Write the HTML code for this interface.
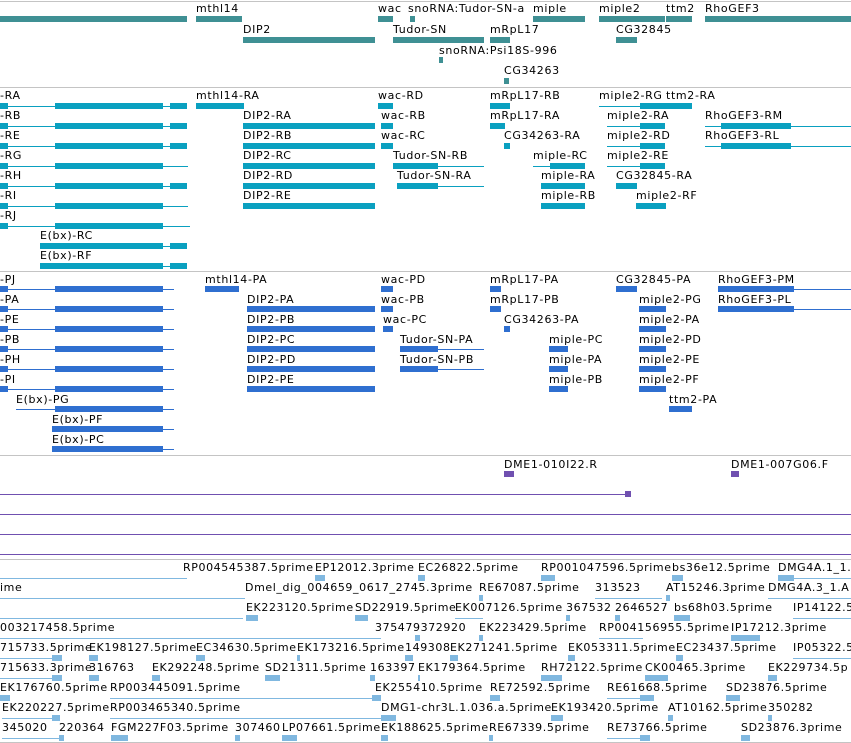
<!DOCTYPE html>
<html><head><meta charset="utf-8"><style>
body{margin:0;width:851px;height:743px;overflow:hidden;background:#fff;position:relative;font-family:"DejaVu Sans","Liberation Sans",sans-serif}
.t{position:absolute;font-size:11px;line-height:13px;white-space:nowrap;color:#000;letter-spacing:.65px}
.s{position:absolute;height:1px;background:#c4c4c4;left:0;width:851px}
.b{position:absolute;height:6px}
.l{position:absolute;height:1px}
.a{background:#3f9094}.c{background:#0aa0c0}.d{background:#2f6fd0}.p{background:#7050b0}.e{background:#80b8e0}
.f{letter-spacing:.6px}
</style></head><body>
<div class="s" style="top:1px"></div>
<div class="s" style="top:87px"></div>
<div class="s" style="top:271px"></div>
<div class="s" style="top:455px"></div>
<div class="s" style="top:559px"></div>
<div class="s" style="top:742px"></div>

<!-- track 1 -->
<div class="t" style="left:196px;top:2px">mthl14</div>
<div class="t" style="left:378px;top:2px">wac</div>
<div class="t" style="left:408px;top:2px">snoRNA:Tudor-SN-a</div>
<div class="t" style="left:533px;top:2px">miple</div>
<div class="t" style="left:599px;top:2px">miple2</div>
<div class="t" style="left:666px;top:2px">ttm2</div>
<div class="t" style="left:705px;top:2px">RhoGEF3</div>
<div class="b a" style="left:0;width:187px;top:16px"></div>
<div class="b a" style="left:196px;width:46px;top:16px"></div>
<div class="b a" style="left:378px;width:15px;top:16px"></div>
<div class="b a" style="left:410px;width:5px;top:16px"></div>
<div class="b a" style="left:533px;width:52px;top:16px"></div>
<div class="b a" style="left:599px;width:66px;top:16px"></div>
<div class="b a" style="left:666px;width:26px;top:16px"></div>
<div class="b a" style="left:705px;width:146px;top:16px"></div>
<div class="t" style="left:243px;top:23px">DIP2</div>
<div class="t" style="left:393px;top:23px">Tudor-SN</div>
<div class="t" style="left:490px;top:23px">mRpL17</div>
<div class="t" style="left:616px;top:23px">CG32845</div>
<div class="b a" style="left:243px;width:132px;top:37px"></div>
<div class="b a" style="left:393px;width:91px;top:37px"></div>
<div class="b a" style="left:490px;width:20px;top:37px"></div>
<div class="b a" style="left:616px;width:21px;top:37px"></div>
<div class="t" style="left:439px;top:44px">snoRNA:Psi18S-996</div>
<div class="b a" style="left:439px;width:4px;top:57px"></div>
<div class="t" style="left:504px;top:64px">CG34263</div>
<div class="b a" style="left:504px;width:5px;top:78px"></div>

<!-- track 2 -->
<div class="t" style="left:0;top:89px">-RA</div>
<div class="t" style="left:0;top:109px">-RB</div>
<div class="t" style="left:0;top:129px">-RE</div>
<div class="t" style="left:0;top:149px">-RG</div>
<div class="t" style="left:0;top:169px">-RH</div>
<div class="t" style="left:0;top:189px">-RI</div>
<div class="t" style="left:0;top:209px">-RJ</div>
<div class="t" style="left:40px;top:229px">E(bx)-RC</div>
<div class="t" style="left:40px;top:249px">E(bx)-RF</div>
<div class="l c" style="left:0;width:187px;top:106px"></div><div class="b c" style="left:55px;width:108px;top:103px"></div><div class="b c" style="left:0;width:8px;top:103px"></div><div class="b c" style="left:170px;width:17px;top:103px"></div>
<div class="l c" style="left:0;width:187px;top:126px"></div><div class="b c" style="left:55px;width:108px;top:123px"></div><div class="b c" style="left:0;width:8px;top:123px"></div><div class="b c" style="left:170px;width:17px;top:123px"></div>
<div class="l c" style="left:0;width:187px;top:146px"></div><div class="b c" style="left:55px;width:108px;top:143px"></div><div class="b c" style="left:0;width:8px;top:143px"></div><div class="b c" style="left:170px;width:17px;top:143px"></div>
<div class="l c" style="left:0;width:188px;top:166px"></div><div class="b c" style="left:55px;width:108px;top:163px"></div><div class="b c" style="left:0;width:8px;top:163px"></div>
<div class="l c" style="left:0;width:187px;top:186px"></div><div class="b c" style="left:55px;width:108px;top:183px"></div><div class="b c" style="left:0;width:8px;top:183px"></div><div class="b c" style="left:170px;width:17px;top:183px"></div>
<div class="l c" style="left:0;width:188px;top:206px"></div><div class="b c" style="left:55px;width:108px;top:203px"></div><div class="b c" style="left:0;width:8px;top:203px"></div>
<div class="l c" style="left:0;width:190px;top:226px"></div><div class="b c" style="left:55px;width:108px;top:223px"></div><div class="b c" style="left:0;width:8px;top:223px"></div>
<div class="l c" style="left:40px;width:147px;top:246px"></div><div class="b c" style="left:40px;width:123px;top:243px"></div><div class="b c" style="left:170px;width:17px;top:243px"></div>
<div class="l c" style="left:40px;width:147px;top:266px"></div><div class="b c" style="left:40px;width:123px;top:263px"></div><div class="b c" style="left:170px;width:17px;top:263px"></div>

<div class="t" style="left:196px;top:89px">mthl14-RA</div><div class="b c" style="left:196px;width:48px;top:103px"></div>
<div class="t" style="left:243px;top:109px">DIP2-RA</div><div class="b c" style="left:243px;width:132px;top:123px"></div>
<div class="t" style="left:243px;top:129px">DIP2-RB</div><div class="b c" style="left:243px;width:132px;top:143px"></div>
<div class="t" style="left:243px;top:149px">DIP2-RC</div><div class="b c" style="left:243px;width:132px;top:163px"></div>
<div class="t" style="left:243px;top:169px">DIP2-RD</div><div class="b c" style="left:243px;width:132px;top:183px"></div>
<div class="t" style="left:243px;top:189px">DIP2-RE</div><div class="b c" style="left:243px;width:132px;top:203px"></div>
<div class="t" style="left:378px;top:89px">wac-RD</div><div class="b c" style="left:378px;width:15px;top:103px"></div>
<div class="t" style="left:381px;top:109px">wac-RB</div><div class="b c" style="left:381px;width:12px;top:123px"></div>
<div class="t" style="left:381px;top:129px">wac-RC</div><div class="b c" style="left:381px;width:12px;top:143px"></div>
<div class="t" style="left:393px;top:149px">Tudor-SN-RB</div><div class="l c" style="left:393px;width:91px;top:166px"></div><div class="b c" style="left:393px;width:45px;top:163px"></div>
<div class="t" style="left:397px;top:169px">Tudor-SN-RA</div><div class="l c" style="left:397px;width:87px;top:186px"></div><div class="b c" style="left:397px;width:41px;top:183px"></div>
<div class="t" style="left:490px;top:89px">mRpL17-RB</div><div class="b c" style="left:490px;width:20px;top:103px"></div>
<div class="t" style="left:490px;top:109px">mRpL17-RA</div><div class="b c" style="left:490px;width:15px;top:123px"></div>
<div class="t" style="left:504px;top:129px">CG34263-RA</div><div class="b c" style="left:504px;width:6px;top:143px"></div>
<div class="t" style="left:533px;top:149px">miple-RC</div><div class="l c" style="left:533px;width:52px;top:166px"></div><div class="b c" style="left:550px;width:35px;top:163px"></div>
<div class="t" style="left:541px;top:169px">miple-RA</div><div class="b c" style="left:541px;width:44px;top:183px"></div>
<div class="t" style="left:541px;top:189px">miple-RB</div><div class="b c" style="left:541px;width:44px;top:203px"></div>
<div class="t" style="left:599px;top:89px">miple2-RG</div><div class="l c" style="left:599px;width:93px;top:106px"></div><div class="b c" style="left:640px;width:52px;top:103px"></div>
<div class="t" style="left:666px;top:89px">ttm2-RA</div>
<div class="t" style="left:607px;top:109px">miple2-RA</div><div class="l c" style="left:607px;width:58px;top:126px"></div><div class="b c" style="left:640px;width:25px;top:123px"></div>
<div class="t" style="left:607px;top:129px">miple2-RD</div><div class="l c" style="left:607px;width:58px;top:146px"></div><div class="b c" style="left:640px;width:25px;top:143px"></div>
<div class="t" style="left:607px;top:149px">miple2-RE</div><div class="l c" style="left:607px;width:58px;top:166px"></div><div class="b c" style="left:640px;width:25px;top:163px"></div>
<div class="t" style="left:616px;top:169px">CG32845-RA</div><div class="b c" style="left:616px;width:21px;top:183px"></div>
<div class="t" style="left:636px;top:189px">miple2-RF</div><div class="b c" style="left:636px;width:30px;top:203px"></div>
<div class="t" style="left:705px;top:109px">RhoGEF3-RM</div><div class="l c" style="left:705px;width:146px;top:126px"></div><div class="b c" style="left:721px;width:70px;top:123px"></div>
<div class="t" style="left:705px;top:129px">RhoGEF3-RL</div><div class="l c" style="left:705px;width:146px;top:146px"></div><div class="b c" style="left:721px;width:70px;top:143px"></div>

<!-- track 3 -->
<div class="t" style="left:0;top:273px">-PJ</div>
<div class="t" style="left:0;top:293px">-PA</div>
<div class="t" style="left:0;top:313px">-PE</div>
<div class="t" style="left:0;top:333px">-PB</div>
<div class="t" style="left:0;top:353px">-PH</div>
<div class="t" style="left:0;top:373px">-PI</div>
<div class="t" style="left:16px;top:393px">E(bx)-PG</div>
<div class="t" style="left:52px;top:413px">E(bx)-PF</div>
<div class="t" style="left:52px;top:433px">E(bx)-PC</div>
<div class="l d" style="left:0;width:174px;top:289px"></div><div class="b d" style="left:55px;width:108px;top:286px"></div><div class="b d" style="left:0;width:8px;top:286px"></div>
<div class="l d" style="left:0;width:174px;top:309px"></div><div class="b d" style="left:55px;width:108px;top:306px"></div><div class="b d" style="left:0;width:8px;top:306px"></div>
<div class="l d" style="left:0;width:174px;top:329px"></div><div class="b d" style="left:55px;width:108px;top:326px"></div><div class="b d" style="left:0;width:8px;top:326px"></div>
<div class="l d" style="left:0;width:174px;top:349px"></div><div class="b d" style="left:55px;width:108px;top:346px"></div><div class="b d" style="left:0;width:8px;top:346px"></div>
<div class="l d" style="left:0;width:174px;top:369px"></div><div class="b d" style="left:55px;width:108px;top:366px"></div><div class="b d" style="left:0;width:8px;top:366px"></div>
<div class="l d" style="left:0;width:174px;top:389px"></div><div class="b d" style="left:55px;width:108px;top:386px"></div><div class="b d" style="left:0;width:8px;top:386px"></div>
<div class="l d" style="left:16px;width:158px;top:409px"></div><div class="b d" style="left:55px;width:108px;top:406px"></div>
<div class="l d" style="left:52px;width:122px;top:429px"></div><div class="b d" style="left:52px;width:111px;top:426px"></div>
<div class="l d" style="left:52px;width:122px;top:449px"></div><div class="b d" style="left:52px;width:111px;top:446px"></div>

<div class="t" style="left:205px;top:273px">mthl14-PA</div><div class="b d" style="left:205px;width:34px;top:286px"></div>
<div class="t" style="left:247px;top:293px">DIP2-PA</div><div class="b d" style="left:247px;width:128px;top:306px"></div>
<div class="t" style="left:247px;top:313px">DIP2-PB</div><div class="b d" style="left:247px;width:128px;top:326px"></div>
<div class="t" style="left:247px;top:333px">DIP2-PC</div><div class="b d" style="left:247px;width:128px;top:346px"></div>
<div class="t" style="left:247px;top:353px">DIP2-PD</div><div class="b d" style="left:247px;width:128px;top:366px"></div>
<div class="t" style="left:247px;top:373px">DIP2-PE</div><div class="b d" style="left:247px;width:128px;top:386px"></div>
<div class="t" style="left:381px;top:273px">wac-PD</div><div class="b d" style="left:381px;width:12px;top:286px"></div>
<div class="t" style="left:381px;top:293px">wac-PB</div><div class="b d" style="left:381px;width:12px;top:306px"></div>
<div class="t" style="left:383px;top:313px">wac-PC</div><div class="b d" style="left:383px;width:10px;top:326px"></div>
<div class="t" style="left:400px;top:333px">Tudor-SN-PA</div><div class="l d" style="left:400px;width:84px;top:349px"></div><div class="b d" style="left:400px;width:38px;top:346px"></div>
<div class="t" style="left:400px;top:353px">Tudor-SN-PB</div><div class="l d" style="left:400px;width:84px;top:369px"></div><div class="b d" style="left:400px;width:38px;top:366px"></div>
<div class="t" style="left:490px;top:273px">mRpL17-PA</div><div class="b d" style="left:490px;width:11px;top:286px"></div>
<div class="t" style="left:490px;top:293px">mRpL17-PB</div><div class="b d" style="left:490px;width:11px;top:306px"></div>
<div class="t" style="left:504px;top:313px">CG34263-PA</div><div class="b d" style="left:504px;width:6px;top:326px"></div>
<div class="t" style="left:549px;top:333px">miple-PC</div><div class="b d" style="left:549px;width:19px;top:346px"></div>
<div class="t" style="left:549px;top:353px">miple-PA</div><div class="b d" style="left:549px;width:19px;top:366px"></div>
<div class="t" style="left:549px;top:373px">miple-PB</div><div class="b d" style="left:549px;width:19px;top:386px"></div>
<div class="t" style="left:616px;top:273px">CG32845-PA</div><div class="b d" style="left:616px;width:21px;top:286px"></div>
<div class="t" style="left:639px;top:293px">miple2-PG</div><div class="b d" style="left:639px;width:27px;top:306px"></div>
<div class="t" style="left:639px;top:313px">miple2-PA</div><div class="b d" style="left:639px;width:27px;top:326px"></div>
<div class="t" style="left:639px;top:333px">miple2-PD</div><div class="b d" style="left:639px;width:27px;top:346px"></div>
<div class="t" style="left:639px;top:353px">miple2-PE</div><div class="b d" style="left:639px;width:27px;top:366px"></div>
<div class="t" style="left:639px;top:373px">miple2-PF</div><div class="b d" style="left:639px;width:27px;top:386px"></div>
<div class="t" style="left:669px;top:393px">ttm2-PA</div><div class="b d" style="left:669px;width:23px;top:406px"></div>
<div class="t" style="left:718px;top:273px">RhoGEF3-PM</div><div class="l d" style="left:718px;width:133px;top:289px"></div><div class="b d" style="left:718px;width:76px;top:286px"></div>
<div class="t" style="left:718px;top:293px">RhoGEF3-PL</div><div class="l d" style="left:718px;width:133px;top:309px"></div><div class="b d" style="left:718px;width:76px;top:306px"></div>

<!-- track 4 -->
<div class="t" style="left:504px;top:458px">DME1-010I22.R</div><div class="b p" style="left:504px;width:10px;top:471px"></div>
<div class="t" style="left:731px;top:458px">DME1-007G06.F</div><div class="b p" style="left:731px;width:8px;top:471px"></div>
<div class="l p" style="left:0;width:630px;top:494px"></div><div class="b p" style="left:625px;width:6px;top:491px"></div>
<div class="l p" style="left:0;width:851px;top:514px"></div>
<div class="l p" style="left:0;width:851px;top:534px"></div>
<div class="l p" style="left:0;width:851px;top:554px"></div>

<!-- track 5 -->
<div class="t f" style="left:183px;top:561px">RP004545387.5prime</div>
<div class="t f" style="left:315px;top:561px">EP12012.3prime</div>
<div class="t f" style="left:418px;top:561px">EC26822.5prime</div>
<div class="t f" style="left:541px;top:561px">RP001047596.5prime</div>
<div class="t f" style="left:672px;top:561px">bs36e12.5prime</div>
<div class="t f" style="left:778px;top:561px">DMG4A.1_1.A</div>
<div class="t f" style="left:0;top:581px">ime</div>
<div class="t f" style="left:245px;top:581px">Dmel_dig_004659_0617_2745.3prime</div>
<div class="t f" style="left:479px;top:581px">RE67087.5prime</div>
<div class="t f" style="left:595px;top:581px">313523</div>
<div class="t f" style="left:666px;top:581px">AT15246.3prime</div>
<div class="t f" style="left:768px;top:581px">DMG4A.3_1.A</div>
<div class="t f" style="left:246px;top:601px">EK223120.5prime</div>
<div class="t f" style="left:355px;top:601px">SD22919.5prime</div>
<div class="t f" style="left:455px;top:601px">EK007126.5prime</div>
<div class="t f" style="left:566px;top:601px">367532</div>
<div class="t f" style="left:615px;top:601px">2646527</div>
<div class="t f" style="left:674px;top:601px">bs68h03.5prime</div>
<div class="t f" style="left:793px;top:601px">IP14122.5</div>
<div class="t f" style="left:0;top:621px">003217458.5prime</div>
<div class="t f" style="left:375px;top:621px">375479372920</div>
<div class="t f" style="left:479px;top:621px">EK223429.5prime</div>
<div class="t f" style="left:599px;top:621px">RP004156955.5prime</div>
<div class="t f" style="left:731px;top:621px">IP17212.3prime</div>
<div class="t f" style="left:0;top:641px">715733.5prime</div>
<div class="t f" style="left:89px;top:641px">EK198127.5prime</div>
<div class="t f" style="left:196px;top:641px">EC34630.5prime</div>
<div class="t f" style="left:297px;top:641px">EK173216.5prime</div>
<div class="t f" style="left:405px;top:641px">149308</div>
<div class="t f" style="left:450px;top:641px">EK271241.5prime</div>
<div class="t f" style="left:568px;top:641px">EK053311.5prime</div>
<div class="t f" style="left:676px;top:641px">EC23437.5prime</div>
<div class="t f" style="left:793px;top:641px">IP05322.5</div>
<div class="t f" style="left:0;top:661px">715633.3prime</div>
<div class="t f" style="left:89px;top:661px">316763</div>
<div class="t f" style="left:152px;top:661px">EK292248.5prime</div>
<div class="t f" style="left:265px;top:661px">SD21311.5prime</div>
<div class="t f" style="left:370px;top:661px">163397</div>
<div class="t f" style="left:418px;top:661px">EK179364.5prime</div>
<div class="t f" style="left:541px;top:661px">RH72122.5prime</div>
<div class="t f" style="left:645px;top:661px">CK00465.3prime</div>
<div class="t f" style="left:768px;top:661px">EK229734.5p</div>
<div class="t f" style="left:0;top:681px">EK176760.5prime</div>
<div class="t f" style="left:110px;top:681px">RP003445091.5prime</div>
<div class="t f" style="left:375px;top:681px">EK255410.5prime</div>
<div class="t f" style="left:490px;top:681px">RE72592.5prime</div>
<div class="t f" style="left:607px;top:681px">RE61668.5prime</div>
<div class="t f" style="left:726px;top:681px">SD23876.5prime</div>
<div class="t f" style="left:2px;top:701px">EK220227.5prime</div>
<div class="t f" style="left:110px;top:701px">RP003465340.5prime</div>
<div class="t f" style="left:381px;top:701px">DMG1-chr3L.1.036.a.5prime</div>
<div class="t f" style="left:551px;top:701px">EK193420.5prime</div>
<div class="t f" style="left:668px;top:701px">AT10162.5prime</div>
<div class="t f" style="left:768px;top:701px">350282</div>
<div class="t f" style="left:2px;top:721px">345020</div>
<div class="t f" style="left:59px;top:721px">220364</div>
<div class="t f" style="left:111px;top:721px">FGM227F03.5prime</div>
<div class="t f" style="left:235px;top:721px">307460</div>
<div class="t f" style="left:282px;top:721px">LP07661.5prime</div>
<div class="t f" style="left:381px;top:721px">EK188625.5prime</div>
<div class="t f" style="left:489px;top:721px">RE67339.5prime</div>
<div class="t f" style="left:607px;top:721px">RE73766.5prime</div>
<div class="t f" style="left:741px;top:721px">SD23876.3prime</div>

<div class="l e" style="left:0;width:187px;top:578px"></div><div class="b e" style="left:315px;width:10px;top:575px"></div><div class="b e" style="left:418px;width:7px;top:575px"></div><div class="b e" style="left:541px;width:14px;top:575px"></div><div class="b e" style="left:672px;width:11px;top:575px"></div><div class="l e" style="left:778px;width:73px;top:578px"></div><div class="b e" style="left:778px;width:16px;top:575px"></div>
<div class="l e" style="left:0;width:245px;top:598px"></div><div class="b e" style="left:479px;width:4px;top:595px"></div><div class="l e" style="left:595px;width:67px;top:598px"></div><div class="b e" style="left:666px;width:4px;top:595px"></div><div class="l e" style="left:768px;width:83px;top:598px"></div>
<div class="l e" style="left:0;width:243px;top:618px"></div><div class="b e" style="left:246px;width:12px;top:615px"></div><div class="b e" style="left:355px;width:13px;top:615px"></div><div class="l e" style="left:455px;width:28px;top:618px"></div><div class="b e" style="left:566px;width:4px;top:615px"></div><div class="b e" style="left:615px;width:5px;top:615px"></div><div class="b e" style="left:674px;width:16px;top:615px"></div><div class="l e" style="left:793px;width:58px;top:618px"></div>
<div class="l e" style="left:0;width:381px;top:638px"></div><div class="b e" style="left:415px;width:5px;top:635px"></div><div class="b e" style="left:479px;width:4px;top:635px"></div><div class="l e" style="left:599px;width:44px;top:638px"></div><div class="b e" style="left:731px;width:29px;top:635px"></div>
<div class="l e" style="left:0;width:60px;top:658px"></div><div class="b e" style="left:52px;width:10px;top:655px"></div><div class="b e" style="left:89px;width:9px;top:655px"></div><div class="b e" style="left:196px;width:9px;top:655px"></div><div class="b e" style="left:297px;width:3px;top:655px"></div><div class="b e" style="left:405px;width:8px;top:655px"></div><div class="b e" style="left:450px;width:8px;top:655px"></div><div class="b e" style="left:568px;width:7px;top:655px"></div><div class="b e" style="left:676px;width:7px;top:655px"></div><div class="l e" style="left:793px;width:58px;top:658px"></div>
<div class="l e" style="left:0;width:60px;top:678px"></div><div class="b e" style="left:52px;width:10px;top:675px"></div><div class="b e" style="left:89px;width:10px;top:675px"></div><div class="b e" style="left:152px;width:8px;top:675px"></div><div class="b e" style="left:265px;width:15px;top:675px"></div><div class="b e" style="left:370px;width:5px;top:675px"></div><div class="b e" style="left:418px;width:2px;top:675px"></div><div class="b e" style="left:541px;width:21px;top:675px"></div><div class="b e" style="left:645px;width:23px;top:675px"></div><div class="b e" style="left:768px;width:9px;top:675px"></div>
<div class="b e" style="left:0;width:10px;top:695px"></div><div class="l e" style="left:110px;width:271px;top:698px"></div><div class="b e" style="left:372px;width:9px;top:695px"></div><div class="b e" style="left:490px;width:10px;top:695px"></div><div class="l e" style="left:607px;width:47px;top:698px"></div><div class="b e" style="left:640px;width:14px;top:695px"></div><div class="b e" style="left:726px;width:14px;top:695px"></div>
<div class="l e" style="left:2px;width:58px;top:718px"></div><div class="b e" style="left:52px;width:8px;top:715px"></div><div class="l e" style="left:110px;width:271px;top:718px"></div><div class="b e" style="left:381px;width:15px;top:715px"></div><div class="b e" style="left:551px;width:12px;top:715px"></div><div class="b e" style="left:668px;width:5px;top:715px"></div><div class="b e" style="left:768px;width:4px;top:715px"></div>
<div class="l e" style="left:2px;width:58px;top:738px"></div><div class="b e" style="left:59px;width:5px;top:735px"></div><div class="b e" style="left:111px;width:17px;top:735px"></div><div class="b e" style="left:235px;width:5px;top:735px"></div><div class="b e" style="left:282px;width:15px;top:735px"></div><div class="b e" style="left:381px;width:7px;top:735px"></div><div class="b e" style="left:489px;width:4px;top:735px"></div><div class="l e" style="left:607px;width:43px;top:738px"></div><div class="b e" style="left:640px;width:10px;top:735px"></div><div class="b e" style="left:741px;width:9px;top:735px"></div>
</body></html>
